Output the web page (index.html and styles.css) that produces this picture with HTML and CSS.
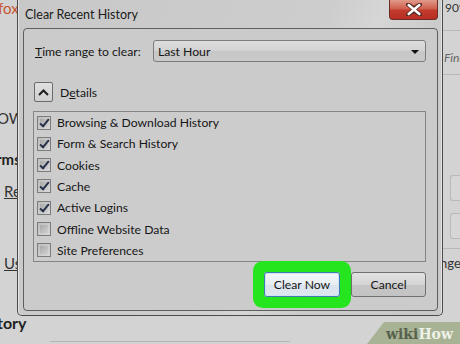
FILE: index.html
```html
<!DOCTYPE html>
<html>
<head>
<meta charset="utf-8">
<link rel="stylesheet" href="styles.css">
</head>
<body>
<div class="screen">
  <div class="page">
    <div class="page-left">
      <div class="frag fox">fox</div>
      <div class="frag ow">OW</div>
      <div class="frag rms">rms</div>
      <div class="frag re"><u>Re</u></div>
      <div class="frag us"><u>Us</u></div>
      <div class="frag tory">tory</div>
    </div>
    <div class="page-right">
      <div class="frag pct">90%</div>
      <div class="rline top-line"></div>
      <div class="frag find">Find</div>
      <div class="rline"></div>
      <div class="rbox first"></div>
      <div class="rbox"></div>
      <div class="rline low"></div>
      <div class="frag nge">nge</div>
    </div>
  </div>
  <div class="bottom-line"></div>

  <div class="dialog">
    <div class="titlebar">Clear Recent History</div>
    <div class="close">
      <svg width="16" height="13" viewBox="0 0 16 13"><path d="M2 1.5 L8 5.2 L14 1.5 M2 11.5 L8 7.8 L14 11.5 M2 1.5 L14 11.5 M14 1.5 L2 11.5" stroke="#5a2a24" stroke-width="4.2" stroke-linecap="round" fill="none"/><path d="M2.6 2 L13.4 11 M13.4 2 L2.6 11" stroke="#ffffff" stroke-width="2.4" stroke-linecap="round" fill="none"/></svg>
    </div>
    <div class="client">
      <div class="range-row">
        <span class="label"><u>T</u>ime range to clear:</span>
        <div class="select">
          <span>Last Hour</span>
          <span class="arrow"></span>
        </div>
      </div>
      <div class="details-row">
        <div class="toggle">
          <svg width="11" height="7" viewBox="0 0 11 7"><path d="M1 6 L5.5 1.5 L10 6" stroke="#1c1c1c" stroke-width="2" fill="none"/></svg>
        </div>
        <span>D<u>e</u>tails</span>
      </div>
      <div class="list">
        <div class="item"><span class="cb on"></span>Browsing &amp; Download History</div>
        <div class="item"><span class="cb on"></span>Form &amp; Search History</div>
        <div class="item"><span class="cb on"></span>Cookies</div>
        <div class="item"><span class="cb on"></span>Cache</div>
        <div class="item"><span class="cb on"></span>Active Logins</div>
        <div class="item"><span class="cb"></span>Offline Website Data</div>
        <div class="item"><span class="cb"></span>Site Preferences</div>
      </div>
      <div class="buttons">
        <div class="btn primary">Clear Now</div>
        <div class="btn">Cancel</div>
      </div>
    </div>
  </div>

  <div class="wikihow"><span class="wiki">wiki</span><span class="how">How</span></div>
</div>
</body>
</html>
```
FILE: styles.css
```css
html, body {
  margin: 0;
  padding: 0;
}
body {
  font-family: "Lato", "Liberation Sans", sans-serif;
  font-size: 12.2px;
  color: #161616;
}
.screen {
  position: relative;
  width: 460px;
  height: 344px;
  overflow: hidden;
  background: #d3d3d3;
}
.page {
  display: flex;
  justify-content: space-between;
  height: 344px;
}
.page-left {
  width: 60px;
  display: flex;
  flex-direction: column;
  font-size: 15px;
}
.frag {
  white-space: nowrap;
  line-height: 16px;
}
.fox { color: #c8552d; margin-top: 0; margin-left: -2px; }
.ow { margin-top: 94px; margin-left: -3px; color: #333; }
.rms { margin-top: 25px; margin-left: -4px; font-weight: bold; color: #222; }
.re { margin-top: 16px; margin-left: 4px; color: #333; }
.us { margin-top: 56px; margin-left: 4px; color: #333; }
.tory { margin-top: 44px; margin-left: -3px; font-weight: bold; color: #222; font-size: 16px; }
.page-right {
  width: 17px;
  display: flex;
  flex-direction: column;
  font-size: 12px;
  overflow: hidden;
}
.pct { margin-top: 0; margin-left: 2px; color: #333; }
.rline { height: 1px; background: #b8b8b8; margin-top: 8px; }
.rline.top-line { margin-top: 14px; }
.find { margin-top: 19px; margin-left: 1px; font-style: italic; color: #666; }
.rbox {
  height: 24px;
  margin-left: 7px;
  margin-top: 100px;
  border: 1px solid #b9b9b9;
  border-right: none;
  border-radius: 3px 0 0 3px;
  background: #d6d6d6;
}
.rbox + .rbox { margin-top: 12px; }
.rline.low { margin-top: 9px; }
.nge { margin-top: 6px; margin-left: -3px; color: #333; font-size: 13px; }
.bottom-line {
  position: absolute;
  left: 50px;
  top: 341px;
  width: 240px;
  height: 1px;
  background: #b5b5b5;
}

/* dialog */
.dialog {
  position: absolute;
  left: 17px;
  top: 0;
  width: 426px;
  height: 316px;
  box-sizing: border-box;
  border: 1px solid #4b4b4b;
  border-top: none;
  border-radius: 0 0 5px 5px;
  padding: 0 4px 4px 5px;
  background: linear-gradient(115deg, #c8c8c8 0%, #cdcdcd 55%, #d6d6d6 65%, #cbcbcb 75%, #c9c9c9 100%);
  box-shadow: inset 1px 0 0 #e2e2e2, inset -1px 0 0 #e2e2e2;
  display: flex;
  flex-direction: column;
}
.titlebar {
  height: 28px;
  line-height: 30px;
  padding-left: 2px;
  font-size: 12.5px;
  color: #1a1a1a;
}
.close {
  position: absolute;
  top: 0;
  right: 4px;
  width: 49px;
  height: 20px;
  box-sizing: border-box;
  border: 1px solid #6e2b24;
  border-top: none;
  border-radius: 0 0 4px 4px;
  background: linear-gradient(#e09a8a 0%, #d0604f 45%, #c13a2c 55%, #b62f22 100%);
  display: flex;
  align-items: center;
  justify-content: center;
}
.client {
  flex: 1;
  box-sizing: border-box;
  border: 1px solid #5f5f5f;
  border-radius: 4px;
  background: #cbcbcb;
  padding: 11px 11px 0 9px;
  display: flex;
  flex-direction: column;
}
.range-row {
  display: flex;
  align-items: center;
  height: 22px;
}
.label {
  width: 118px;
  padding-left: 2px;
}
.select {
  flex: 1;
  height: 22px;
  box-sizing: border-box;
  border: 1px solid #7c7c7c;
  border-radius: 3px;
  background: linear-gradient(#dedede, #d2d2d2 50%, #c7c7c7 51%, #c9c9c9);
  display: flex;
  align-items: center;
  justify-content: space-between;
  padding: 0 6px 0 4px;
}
.arrow {
  width: 0;
  height: 0;
  border-left: 4px solid transparent;
  border-right: 4px solid transparent;
  border-top: 4px solid #111;
  margin-top: 1px;
}
.details-row {
  display: flex;
  align-items: center;
  gap: 7px;
  margin-top: 20px;
  height: 20px;
}
.toggle {
  width: 19px;
  height: 20px;
  box-sizing: border-box;
  margin-left: 1px;
  border: 1px solid #6a6a6a;
  border-radius: 2px;
  background: linear-gradient(#e0e0e0, #cfcfcf);
  display: flex;
  align-items: center;
  justify-content: center;
}
.list {
  margin-top: 9px;
  height: 151px;
  box-sizing: border-box;
  border: 1px solid #858585;
  background: #cccccc;
  display: grid;
  grid-template-rows: repeat(7, 1fr);
}
.item {
  display: flex;
  align-items: center;
  gap: 6px;
  padding-left: 3px;
}
.cb {
  width: 14px;
  height: 14px;
  box-sizing: border-box;
  border: 1px solid #7c7c7c;
  background: linear-gradient(135deg, #bdbdbd, #d8d8d8);
  position: relative;
}
.cb::before {
  content: "";
  position: absolute;
  inset: 2px;
  background: linear-gradient(135deg, #a9a9a9, #cfcfcf);
}
.cb.on::after {
  content: "";
  position: absolute;
  left: 4px;
  top: 0px;
  width: 3px;
  height: 8px;
  border-right: 2px solid #27314a;
  border-bottom: 2px solid #27314a;
  transform: rotate(40deg);
}
.buttons {
  display: flex;
  justify-content: flex-end;
  gap: 11px;
  margin-top: 10px;
}
.btn {
  width: 75px;
  height: 25px;
  box-sizing: border-box;
  border: 1px solid #707070;
  border-radius: 3px;
  background: linear-gradient(#e2e2e2, #d4d4d4 50%, #c5c5c5 51%, #c3c3c3);
  display: flex;
  align-items: center;
  justify-content: center;
}
.btn.primary {
  width: 76px;
  border-color: #3d7db3;
  background: linear-gradient(#f4f7fa, #e8eef3 50%, #dbe4ec 51%, #dfe8ef);
  box-shadow: inset 0 0 0 1px #cfe3f2, 0 0 0 11px #25e51f;
}

/* watermark */
.wikihow {
  position: absolute;
  left: 367px;
  top: 322px;
  width: 93px;
  height: 22px;
  background: #a7b394;
  clip-path: polygon(17px 0, 100% 0, 100% 100%, 0 100%);
  font-family: "DejaVu Serif", "Liberation Serif", serif;
  font-weight: bold;
  font-size: 14px;
  line-height: 24px;
  padding-left: 19px;
  box-sizing: border-box;
  white-space: nowrap;
}
.wiki { color: #58614c; }
.how { color: #eef1e8; }
```
